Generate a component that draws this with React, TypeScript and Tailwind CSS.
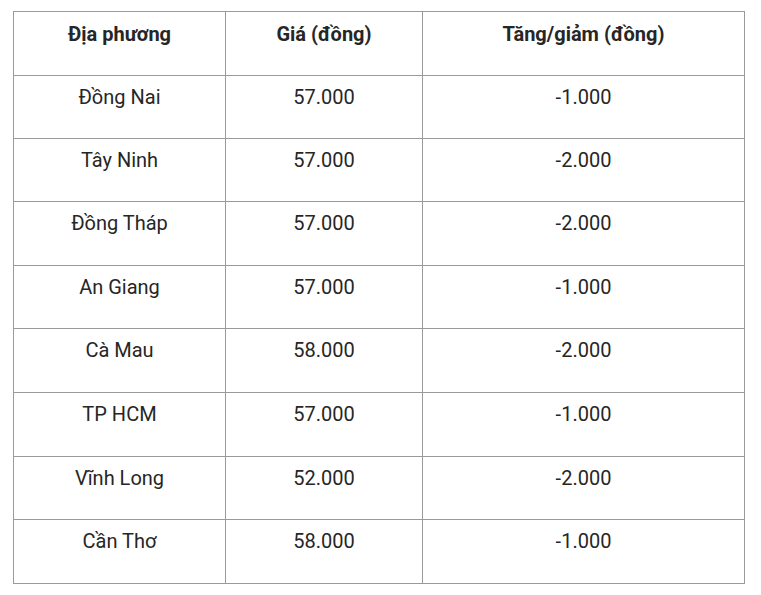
const rows = [
  ["Đồng Nai", "57.000", "-1.000"],
  ["Tây Ninh", "57.000", "-2.000"],
  ["Đồng Tháp", "57.000", "-2.000"],
  ["An Giang", "57.000", "-1.000"],
  ["Cà Mau", "58.000", "-2.000"],
  ["TP HCM", "57.000", "-1.000"],
  ["Vĩnh Long", "52.000", "-2.000"],
  ["Cần Thơ", "58.000", "-1.000"],
];

export default function App() {
  return (
    <div className="w-[761px] h-[595px] bg-white pl-[13px] pt-[11px] font-['Roboto',sans-serif] text-[20px] leading-[24px] text-[#262626]">
      <div className="w-[732px] grid grid-cols-[211px_196px_321px] grid-rows-[63px_62px_62px_63px_62px_63px_63px_62px_63px] gap-px p-px bg-[#9a9a9a]">
        <div className="bg-white text-center pt-[10px] font-bold">Địa phương</div>
        <div className="bg-white text-center pt-[10px] font-bold">Giá (đồng)</div>
        <div className="bg-white text-center pt-[10px] font-bold">Tăng/giảm (đồng)</div>
        {rows.map((r) =>
          r.map((c, i) => (
            <div key={r[0] + i} className="bg-white text-center pt-[9px]">
              {c}
            </div>
          ))
        )}
      </div>
    </div>
  );
}
